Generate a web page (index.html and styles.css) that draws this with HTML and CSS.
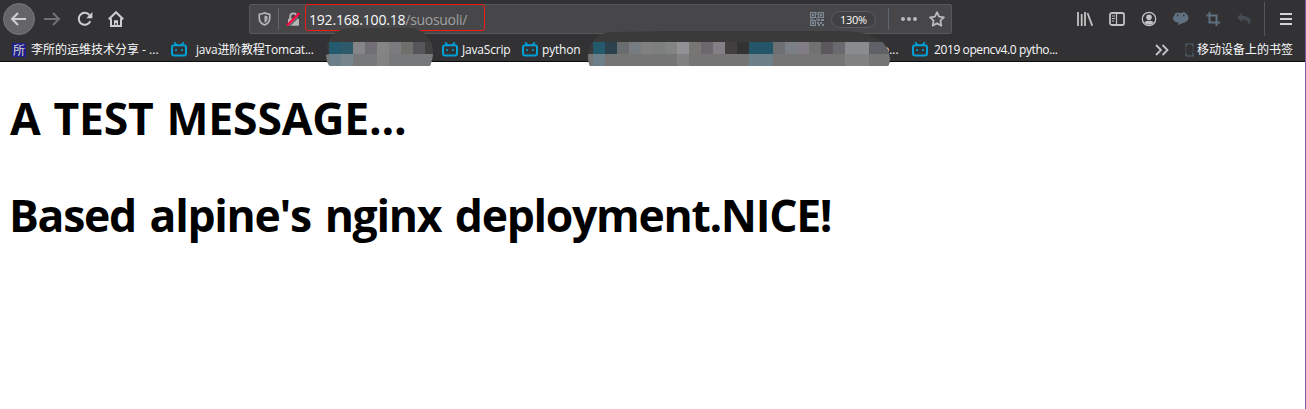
FILE: index.html
```html
<!DOCTYPE html>
<html lang="zh">
<head>
<meta charset="utf-8">
<title>192.168.100.18/suosuoli/</title>
<link rel="stylesheet" href="styles.css">
</head>
<body>
<svg class="defs" width="0" height="0">
  <symbol id="tv" viewBox="0 0 16 15"><path d="M3.6.6l2 2.4M12.4.6l-2 2.4" stroke="#00a1d6" stroke-width="1.6" fill="none" stroke-linecap="round"/><rect x="1" y="3.3" width="14" height="10.2" rx="2.2" fill="none" stroke="#00a1d6" stroke-width="2"/><path d="M5 7v2M11 7v2" stroke="#00a1d6" stroke-width="1.6"/></symbol>
</svg>
<header class="chrome">
  <nav class="toolbar">
    <div class="nav">
      <span class="back"><svg width="18" height="16" viewBox="0 0 18 16"><path d="M16 8H2M8 2L2 8l6 6" class="line"/></svg></span>
      <svg class="forward" width="18" height="16" viewBox="0 0 18 16"><path d="M1 8h15M10 2l6 6-6 6" class="line"/></svg>
      <svg class="reload" width="16" height="16" viewBox="0 0 16 16"><path d="M13.3 10.2A6 6 0 1 1 12.4 4" class="line"/><path d="M15.4 1v6.2H9.2z" fill="#cfcfd1"/></svg>
      <svg class="home" width="16" height="16" viewBox="0 0 16 16"><path d="M.8 8.2L8 1.2l7.2 7M3 7.5V15h10V7.5" class="line"/><path d="M6 15V9.3h4V15H8.8v-3H7.4v3z" fill="#cfcfd1"/></svg>
    </div>
    <div class="address">
      <svg class="shield" width="13" height="14" viewBox="0 0 13 14"><path d="M6.5 1L1.3 2.5v3.7c0 3 2 5.4 5.2 6.8 3.2-1.4 5.2-3.8 5.2-6.8V2.5z" fill="none" stroke="#b5b5b8" stroke-width="1.7"/><path d="M6.5 3.5L9.5 4.2v2.2c0 1.9-1 3.2-3 4.3z" fill="#b5b5b8"/></svg>
      <i class="rule"></i>
      <svg class="lock" width="15" height="15" viewBox="0 0 15 15"><path d="M4.2 7V4.6a3.2 3.2 0 0 1 6.4 0V7" fill="none" stroke="#b5b5b8" stroke-width="1.8"/><rect x="2" y="6.5" width="11" height="7.3" rx="1" fill="#b5b5b8"/><path d="M2.5 14.8L14.5 2.8" stroke="#48484b" stroke-width="1.2"/><path d="M1 13.5L13.5 1" stroke="#ff0039" stroke-width="2.2"/></svg>
      <div class="url"><span class="host">192.168.100.18</span><span class="path">/suosuoli/</span></div>
      <svg class="qr" width="14" height="14" viewBox="0 0 14 14"><path d="M.6.6h4.8v4.8H.6zM8.6.6h4.8v4.8H8.6zM.6 8.6h4.8v4.8H.6z" fill="none" stroke="#7b8794" stroke-width="1.2"/><path d="M2 2h2v2H2zM10 2h2v2h-2zM2 10h2v2H2zM6.5 0h1v3h-1zM6.5 5h1v4h-1zM0 6.5h4v1H0zM8 7h2v2H8zM11 7h3v2h-3zM7 10h2v2H7zM10 10h2v2h-2zM8 12h2v2H8zM12 12h2v2h-2z" fill="#7b8794"/></svg>
      <span class="zoom">130%</span>
      <i class="rule tall"></i>
      <svg class="dots" width="16" height="4" viewBox="0 0 16 4"><g fill="#b9b9bb"><circle cx="2" cy="2" r="2"/><circle cx="8" cy="2" r="2"/><circle cx="14" cy="2" r="2"/></g></svg>
      <svg class="star" width="16" height="16" viewBox="0 0 16 16"><path d="M8 1.2l2.1 4.5 4.8.6-3.5 3.4.9 4.9L8 12.2l-4.3 2.4.9-4.9L1.1 6.3l4.8-.6z" fill="none" stroke="#b9b9bb" stroke-width="1.8" stroke-linejoin="round"/></svg>
    </div>
    <div class="tools">
      <svg width="16" height="14" viewBox="0 0 16 14"><path d="M1 0v14M4.7 2v12M8 0v14" stroke="#c2c2c4" stroke-width="1.8"/><path d="M10.5 1l4.7 12.7" stroke="#c2c2c4" stroke-width="1.8"/></svg>
      <svg width="16" height="14" viewBox="0 0 16 14"><rect x="1" y="1" width="14" height="12" rx="1.8" fill="none" stroke="#c2c2c4" stroke-width="1.8"/><path d="M7.5 1v12M3 4h3M3 6.5h3M3 9h2" stroke="#c2c2c4" stroke-width="1.2"/></svg>
      <svg width="16" height="16" viewBox="0 0 16 16"><circle cx="8" cy="8" r="6.7" fill="none" stroke="#c2c2c4" stroke-width="1.3"/><circle cx="8" cy="6.3" r="2.8" fill="#c2c2c4"/><path d="M3.2 11.4Q5 9.2 8 9.8q3-.6 4.8 1.6Q11 13.7 8 13.7t-4.8-2.3z" fill="#c2c2c4"/></svg>
      <svg width="16" height="14" viewBox="0 0 16 14"><path d="M8 1c1.5-1 4-1 5 .5C14.500 3 15.500 4 15.500 5.500c0 3-2.500 5-5.500 5.500L5 13.300l.6-2.500C2 10.400 0 8.600 0 6c0-1 .7-2 1.400-2.600C1.600 1 4.500 0 6 1z" fill="#5f7080"/><path d="M4 3.500h1.500M10 3.500h1.500" stroke="#323234" stroke-width="1.500"/></svg>
      <svg width="16" height="14" viewBox="-1.500 0 16 14"><path d="M3 0v10.500h10.500M0 3.500h10V14" fill="none" stroke="#5f7080" stroke-width="2"/></svg>
      <svg width="14" height="12" viewBox="0 0 14 12"><path d="M0 4.400L5 0v2.900c5 0 8.500 2 8.500 5.200 0 1.500-.7 2.800-2.300 3.800.7-3.300-1.700-5.200-6.200-5.200V9z" fill="#454c53"/></svg>
    </div>
    <i class="menu-rule"></i>
    <svg class="menu" width="12" height="12" viewBox="0 0 12 12"><path d="M0 1h12M0 6h12M0 11h12" stroke="#d3d3d5" stroke-width="2"/></svg>
  </nav>
  <nav class="bookmarks">
    <a class="bm b1"><b class="favicon">所</b><span>李所的运维技术分享 - ...</span></a>
    <a class="bm b2"><svg width="16" height="15"><use href="#tv"/></svg><span>java进阶教程Tomcat...</span></a>
    <a class="bm b3"><svg width="16" height="15"><use href="#tv"/></svg><span>JavaScrip</span></a>
    <a class="bm b4"><svg width="16" height="15"><use href="#tv"/></svg><span>python</span></a>
    <a class="bm b5"><span>o...</span></a>
    <a class="bm b6"><svg width="16" height="15"><use href="#tv"/></svg><span>2019 opencv4.0 pytho...</span></a>
    <svg class="more" width="14" height="12" viewBox="0 0 14 12"><path d="M1 1l5 5-5 5M7.5 1l5 5-5 5" fill="none" stroke="#c4c4c6" stroke-width="1.8"/></svg>
    <a class="bm b7"><svg width="9" height="14" viewBox="0 0 9 14"><path d="M1 4V1h7v3M1 10v3h7v-3" fill="none" stroke="#536270" stroke-width="1.2"/><path d="M1 5v4M8 5v4" stroke="#424b54"/></svg><span>移动设备上的书签</span></a>
  </nav>
  <svg class="mosaic first" width="107" height="38" viewBox="0 0 107 38">
    <clipPath id="m1"><path d="M3 26C3 24 0 22 1 18 4 6 12 0 28 0h54c15 0 25 10 25 25 0 6-2 9-3 13H4Q0 34 0 27z"/></clipPath>
    <g clip-path="url(#m1)"><path fill="#3b3b3c" d="M0 0h107v38H0z"/><path fill="#777879" d="M0 26h107v12H0z"/><path fill="#235a6d" d="M3 14h12v12H3z"/><path fill="#2e596b" d="M15 14h12v12H15z"/><path fill="#858588" d="M27 14h12v12H27z"/><path fill="#716f75" d="M39 14h12v12H39z"/><path fill="#858585" d="M51 14h12v12H51z"/><path fill="#7b7b7d" d="M63 14h12v12H63z"/><path fill="#706f6b" d="M75 14h12v12H75z"/><path fill="#55555a" d="M87 14h12v12H87z"/><path fill="#424142" d="M99 14h8v12h-8z"/><path fill="#6d8089" d="M3 26h12v12H3z"/><path fill="#76858c" d="M15 26h12v12H15z"/><path fill="#838384" d="M51 26h12v12H51z"/></g>
  </svg>
  <svg class="mosaic second" width="302" height="35" viewBox="0 0 302 35">
    <clipPath id="m2"><path d="M0 27C0 12 8 1 27 1L80 0h170c30 0 47 7 51 22l1 6q0 4-2 7H2Q0 31 0 27z"/></clipPath>
    <g clip-path="url(#m2)"><path fill="#3a3a3b" d="M0 0h302v35H0z"/><path fill="#757576" d="M0 23h302v12H0z"/><path fill="#235a6d" d="M5 11h12v12H5z"/><path fill="#2c414b" d="M17 11h12v12H17z"/><path fill="#6a6d6f" d="M29 11h12v12H29z"/><path fill="#777b82" d="M41 11h12v12H41z"/><path fill="#827f80" d="M53 11h12v12H53z"/><path fill="#7d7e7e" d="M65 11h12v12H65z"/><path fill="#818482" d="M77 11h12v12H77z"/><path fill="#929294" d="M89 11h12v12H89z"/><path fill="#777673" d="M101 11h12v12h-12z"/><path fill="#6b696d" d="M113 11h12v12h-12z"/><path fill="#847f87" d="M125 11h12v12h-12z"/><path fill="#423f41" d="M137 11h12v12h-12z"/><path fill="#333334" d="M149 11h12v12h-12z"/><path fill="#245568" d="M161 11h24v12h-24z"/><path fill="#6c7070" d="M185 11h12v12h-12z"/><path fill="#7b7f86" d="M197 11h12v12h-12z"/><path fill="#817d84" d="M209 11h12v12h-12z"/><path fill="#6f7270" d="M221 11h12v12h-12z"/><path fill="#5a585d" d="M233 11h12v12h-12z"/><path fill="#6b6970" d="M245 11h12v12h-12z"/><path fill="#898c8f" d="M257 11h24v12h-24z"/><path fill="#606067" d="M281 11h21v12h-21z"/><path fill="#6d8089" d="M5 23h12v12H5zM161 23h24v12h-24z"/><path fill="#828282" d="M89 23h12v12H89zM257 23h24v12h-24z"/></g>
  </svg>
</header>
<main class="page">
  <h1 class="h-a">A TEST MESSAGE...</h1>
  <h1 class="h-b">Based alpine's nginx deployment.NICE!</h1>
</main>
</body>
</html>
```
FILE: styles.css
```css
* { box-sizing: border-box; }
body { margin: 0; height: 409px; overflow: hidden; background: #fff; border-right: 1px solid #7b5a9e; font-family: "Open Sans", "Noto Sans CJK SC", sans-serif; }
svg { display: block; flex: none; }
.defs { position: absolute; }
.chrome { position: relative; height: 62px; background: #323234; border-bottom: 1px solid #0c0c0d; }
.toolbar { display: flex; align-items: center; height: 38px; }
.line { fill: none; stroke: #cfcfd1; stroke-width: 2; }
.nav { display: flex; align-items: center; width: 249px; padding-left: 3px; }
.back { display: flex; align-items: center; justify-content: center; width: 32px; height: 32px; border-radius: 50%; background: #656567; border: 1px solid #777779; }
.forward { margin-left: 8px; opacity: .4; }
.reload { margin-left: 16px; }
.home { margin-left: 15px; }
.address { display: flex; align-items: center; width: 703px; height: 30px; background: #474749; border: 1px solid #58585b; border-radius: 2px; }
.shield { margin-left: 8px; }
.rule { width: 1px; height: 22px; margin-left: 7px; background: #5f6770; }
.lock { margin-left: 7px; }
.url { width: 180px; height: 27px; margin: -3px 0 0 4px; padding-left: 3px; border: 1px solid #f21b13; border-radius: 3px; font-size: 14px; line-height: 30px; white-space: nowrap; }
.host { color: #f9f9fa; letter-spacing: -.2px; }
.path { color: #a0a0a2; letter-spacing: -.3px; }
.qr { margin-left: auto; }
.zoom { width: 45px; height: 17px; margin-left: 7px; border-radius: 9px; border: 1px solid #5b5b5e; background: #414143; color: #f9f9fa; font-size: 11px; line-height: 16px; text-align: center; letter-spacing: -.3px; }
.tall { margin-left: 12px; }
.dots { margin-left: 12px; }
.star { margin: 0 6px 0 12px; }
.tools { display: flex; align-items: center; gap: 16px; margin-left: 125px; }
.menu-rule { width: 1px; height: 34px; margin-left: 13px; background: #555557; }
.menu { margin-left: 15px; }
.bookmarks { display: flex; align-items: center; height: 23px; padding-left: 12px; font-size: 12px; color: #f9f9fa; white-space: nowrap; }
.bm { display: flex; align-items: center; height: 23px; line-height: 23px; }
.favicon { width: 14px; height: 14px; margin-right: 5px; background: #20208c; color: #d8d8c8; font: 12px/13px "Noto Sans CJK SC", sans-serif; text-align: center; }
.b1 { width: 159px; }
.b2 { width: 271px; }
.b2 span { margin-left: 9px; letter-spacing: -.22px; }
.b3 { width: 80px; }
.b3 span, .b4 span { margin-left: 4px; letter-spacing: -.2px; }
.b4 { width: 360px; }
.b5 { width: 30px; }
.b6 { width: 243px; }
.b6 span { margin-left: 6px; letter-spacing: -.4px; }
.b7 { margin-left: 16px; }
.b7 span { margin-left: 3px; }
.mosaic { position: absolute; }
.first { left: 326px; top: 28px; }
.second { left: 588px; top: 31px; }
.page { padding: 24px 10px; }
h1 { height: 63px; margin: 0 0 34px; font: 700 44.5px/63px "Open Sans", sans-serif; color: #000; white-space: nowrap; }
.h-a { letter-spacing: -.2px; word-spacing: 1.6px; }
.h-b { margin-left: -1px; letter-spacing: -1.3px; word-spacing: 3.5px; }
```
